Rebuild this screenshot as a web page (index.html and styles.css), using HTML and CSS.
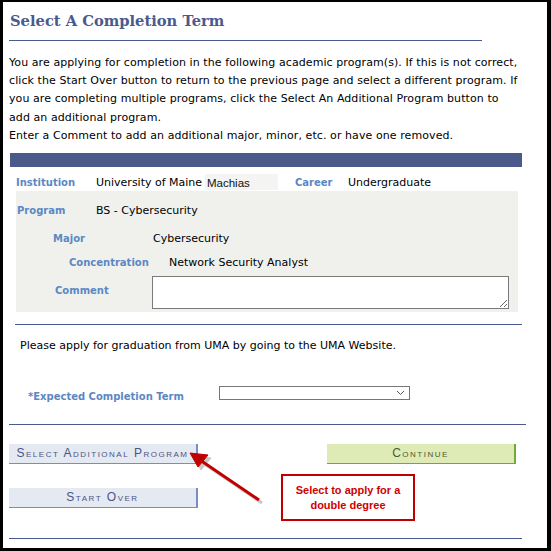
FILE: index.html
```html
<!DOCTYPE html>
<html lang="en">
<head>
  <meta charset="UTF-8">
  <meta name="viewport" content="width=device-width, initial-scale=1.0">
  <title>Select A Completion Term</title>
  <link rel="stylesheet" href="styles.css">
</head>
<body>
  <div class="frame">
    <h1 class="title">Select A Completion Term</h1>

    <div class="intro">
      <p>You are applying for completion in the following academic program(s). If this is not correct, click the Start Over button to return to the previous page and select a different program. If you are completing multiple programs, click the Select An Additional Program button to add an additional program.</p>
      <p>Enter a Comment to add an additional major, minor, etc. or have one removed.</p>
    </div>

    <div class="bar"></div>

    <div class="program">
      <div class="inst-row">
        <span class="label inst-label">Institution</span>
        <span class="value inst-value">University of Maine</span>
        <span class="campus">Machias</span>
        <span class="label career-label">Career</span>
        <span class="value">Undergraduate</span>
      </div>
      <div class="details">
        <div class="row row-program">
          <span class="label">Program</span>
          <span class="value">BS - Cybersecurity</span>
        </div>
        <div class="row row-major">
          <span class="label">Major</span>
          <span class="value">Cybersecurity</span>
        </div>
        <div class="row row-conc">
          <span class="label">Concentration</span>
          <span class="value">Network Security Analyst</span>
        </div>
        <div class="row row-comment">
          <label class="label" for="comment">Comment</label>
          <textarea id="comment"></textarea>
        </div>
      </div>
    </div>

    <hr class="rule rule-program">

    <p class="notice">Please apply for graduation from UMA by going to the UMA Website.</p>

    <div class="term-row">
      <span class="label">*Expected Completion Term</span>
      <div class="select">
        <svg width="9" height="6" viewBox="0 0 9 6"><path d="M1 1 L4.5 4.5 L8 1" fill="none" stroke="#555" stroke-width="1"/></svg>
      </div>
    </div>

    <hr class="rule rule-term">

    <div class="actions">
      <button class="btn">Select Additional Program</button>
      <button class="btn btn-go">Continue</button>
      <button class="btn btn-start">Start Over</button>

      <svg class="arrow" width="90" height="60" viewBox="0 0 90 60">
        <g transform="translate(3,3)" fill="#9a9a9a" stroke="#9a9a9a" opacity="0.55">
          <line x1="71" y1="48" x2="12" y2="8" stroke-width="3"/>
          <polygon points="2,1 20,3 10,15"/>
        </g>
        <g fill="#c00000" stroke="#c00000">
          <line x1="71" y1="48" x2="12" y2="8" stroke-width="3"/>
          <polygon points="2,1 20,3 10,15"/>
        </g>
      </svg>

      <div class="callout">Select to apply for a<br>double degree</div>
    </div>

    <hr class="rule rule-bottom">
  </div>
</body>
</html>
```

FILE: styles.css
```css
body {
  margin: 0;
  padding: 0;
  background: #fff;
}
.frame {
  width: 551px;
  height: 551px;
  box-sizing: border-box;
  border-style: solid;
  border-color: #000;
  border-width: 2px 4px 3px 3px;
  padding: 0 0 0 6px;
  font-family: "DejaVu Sans", Verdana, sans-serif;
  font-size: 11px;
  color: #000;
  overflow: hidden;
}
.title {
  margin: 0;
  width: 472px;
  padding: 8px 0 9px 1px;
  border-bottom: 1px solid #4b5a8e;
  font-family: "DejaVu Serif", Georgia, serif;
  font-size: 14.7px;
  line-height: 21px;
  color: #4b5a8e;
}
.intro {
  margin-top: 13px;
  width: 510px;
  line-height: 18.2px;
  letter-spacing: 0.08px;
}
.intro p {
  margin: 0;
}
.bar {
  margin: 8px 0 0 1px;
  width: 512px;
  height: 14px;
  background: #4b5a8b;
}
.label {
  font-size: 10px;
  font-weight: bold;
  color: #5b88c4;
}
.program {
  margin-left: 7px;
  width: 502px;
}
.inst-row {
  display: flex;
  align-items: center;
  height: 18px;
  margin-top: 6px;
}
.inst-label {
  width: 80px;
}
.inst-value {
  width: 109px;
}
.campus {
  padding: 0 0 0 2px;
  width: 71px;
  height: 16px;
  line-height: 18px;
  background: #f4f4f2;
  font-family: "Liberation Sans", Arial, sans-serif;
  font-size: 11.5px;
  color: #111;
}
.career-label {
  margin-left: 17px;
  width: 53px;
}
.details {
  background: #f0f1ed;
  padding: 13px 0 3px 1px;
}
.row {
  display: flex;
  align-items: center;
  line-height: 14px;
}
.row-program .label {
  width: 79px;
}
.row-major {
  margin-top: 14px;
}
.row-major .label {
  margin-left: 36px;
  width: 100px;
}
.row-conc {
  margin-top: 10px;
}
.row-conc .label {
  margin-left: 52px;
  width: 100px;
}
.row-comment {
  margin-top: 6px;
  align-items: flex-start;
}
.row-comment .label {
  margin: 8px 0 0 38px;
  width: 97px;
}
.row-comment textarea {
  width: 357px;
  height: 33px;
  box-sizing: border-box;
  border: 1px solid #7a7a7a;
  background: #fff;
  margin: 0;
  padding: 0;
}
.rule {
  border: 0;
  border-top: 1px solid #4b5a8e;
  margin: 0;
}
.rule-program {
  margin: 12px 0 0 6px;
  width: 507px;
}
.notice {
  margin: 14px 0 0 11px;
  line-height: 14px;
}
.term-row {
  display: flex;
  align-items: flex-start;
  margin: 33px 0 0 19px;
  height: 25px;
}
.term-row .label {
  width: 191px;
  margin-top: 4px;
  line-height: 14px;
}
.select {
  width: 191px;
  height: 14px;
  box-sizing: border-box;
  border: 1px solid #777;
  background: #fff;
  display: flex;
  justify-content: flex-end;
  align-items: center;
  padding-right: 4px;
}
.rule-term {
  margin-top: 13px;
  width: 517px;
}
.actions {
  position: relative;
  display: grid;
  grid-template-columns: 189px 189px;
  grid-auto-rows: 20px;
  justify-content: space-between;
  align-content: start;
  width: 507px;
  row-gap: 24px;
  margin-top: 19px;
  height: 94px;
}
.btn {
  height: 20px;
  border: 0;
  border-right: 2px solid #7b8cc4;
  border-bottom: 1px solid #7b8cc4;
  background: #e5e9f2;
  color: #4b5584;
  font-family: "Liberation Sans", Arial, sans-serif;
  font-size: 12px;
  font-variant: small-caps;
  letter-spacing: 1.5px;
  padding: 0 0 1px;
}
.btn-go {
  background: #deebb6;
  border-color: #74a83a;
  color: #4b5a2e;
}
.arrow {
  position: absolute;
  left: 179px;
  top: 8px;
}
.callout {
  position: absolute;
  left: 272px;
  top: 30px;
  width: 130px;
  height: 43px;
  border: 2px solid #c00000;
  display: flex;
  align-items: center;
  justify-content: center;
  text-align: center;
  color: #d00000;
  font-family: "Liberation Sans", Arial, sans-serif;
  font-weight: bold;
  font-size: 11px;
  line-height: 15px;
}
.rule-bottom {
  width: 513px;
}
```
